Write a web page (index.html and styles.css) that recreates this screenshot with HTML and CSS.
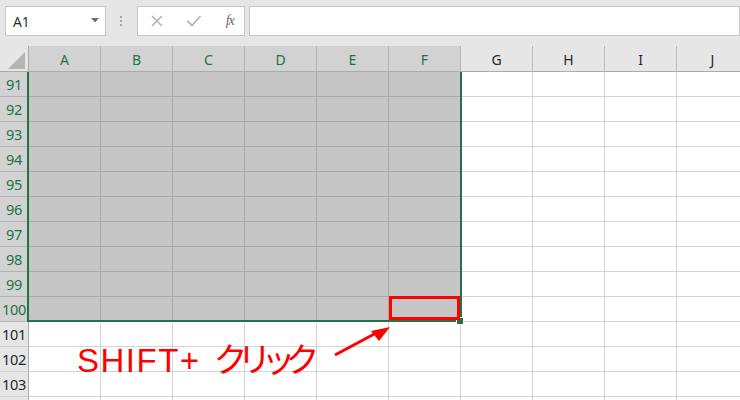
FILE: index.html
```html
<!DOCTYPE html>
<html lang="ja">
<head>
<meta charset="utf-8">
<title>Excel selection</title>
<link rel="stylesheet" href="styles.css">
</head>
<body>
<div class="app">
  <div class="toolbar">
    <div class="namebox">
      <span class="namebox-text">A1</span>
      <svg class="dropdown" width="8" height="5" viewBox="0 0 8 5"><path d="M0 0H8L4 4.5Z" fill="#6f6f6f"/></svg>
    </div>
    <div class="grip"><span></span><span></span><span></span></div>
    <div class="fbuttons">
      <svg class="ficon" width="14" height="14" viewBox="0 0 14 14"><path d="M2 2L12 12M12 2L2 12" stroke="#b4b4b4" stroke-width="1.6" fill="none"/></svg>
      <svg class="ficon" width="16" height="14" viewBox="0 0 16 14"><path d="M1.5 7L6 11.5L14.5 2" stroke="#b4b4b4" stroke-width="1.8" fill="none"/></svg>
      <span class="fx">fx</span>
    </div>
    <div class="formula"></div>
  </div>

  <div class="sheet">
    <div class="grid">
      <div class="corner"><span class="tri"></span></div>
      <div class="ch sel">A</div><div class="ch sel">B</div><div class="ch sel">C</div><div class="ch sel">D</div><div class="ch sel">E</div><div class="ch sel">F</div>
      <div class="ch">G</div><div class="ch">H</div><div class="ch">I</div><div class="ch">J</div>

      <div class="rh sel">91</div><div class="c s"></div><div class="c s"></div><div class="c s"></div><div class="c s"></div><div class="c s"></div><div class="c s"></div><div class="c"></div><div class="c"></div><div class="c"></div><div class="c"></div>
      <div class="rh sel">92</div><div class="c s"></div><div class="c s"></div><div class="c s"></div><div class="c s"></div><div class="c s"></div><div class="c s"></div><div class="c"></div><div class="c"></div><div class="c"></div><div class="c"></div>
      <div class="rh sel">93</div><div class="c s"></div><div class="c s"></div><div class="c s"></div><div class="c s"></div><div class="c s"></div><div class="c s"></div><div class="c"></div><div class="c"></div><div class="c"></div><div class="c"></div>
      <div class="rh sel">94</div><div class="c s"></div><div class="c s"></div><div class="c s"></div><div class="c s"></div><div class="c s"></div><div class="c s"></div><div class="c"></div><div class="c"></div><div class="c"></div><div class="c"></div>
      <div class="rh sel">95</div><div class="c s"></div><div class="c s"></div><div class="c s"></div><div class="c s"></div><div class="c s"></div><div class="c s"></div><div class="c"></div><div class="c"></div><div class="c"></div><div class="c"></div>
      <div class="rh sel">96</div><div class="c s"></div><div class="c s"></div><div class="c s"></div><div class="c s"></div><div class="c s"></div><div class="c s"></div><div class="c"></div><div class="c"></div><div class="c"></div><div class="c"></div>
      <div class="rh sel">97</div><div class="c s"></div><div class="c s"></div><div class="c s"></div><div class="c s"></div><div class="c s"></div><div class="c s"></div><div class="c"></div><div class="c"></div><div class="c"></div><div class="c"></div>
      <div class="rh sel">98</div><div class="c s"></div><div class="c s"></div><div class="c s"></div><div class="c s"></div><div class="c s"></div><div class="c s"></div><div class="c"></div><div class="c"></div><div class="c"></div><div class="c"></div>
      <div class="rh sel">99</div><div class="c s"></div><div class="c s"></div><div class="c s"></div><div class="c s"></div><div class="c s"></div><div class="c s"></div><div class="c"></div><div class="c"></div><div class="c"></div><div class="c"></div>
      <div class="rh sel">100</div><div class="c s"></div><div class="c s"></div><div class="c s"></div><div class="c s"></div><div class="c s"></div><div class="c s"></div><div class="c"></div><div class="c"></div><div class="c"></div><div class="c"></div>
      <div class="rh">101</div><div class="c"></div><div class="c"></div><div class="c"></div><div class="c"></div><div class="c"></div><div class="c"></div><div class="c"></div><div class="c"></div><div class="c"></div><div class="c"></div>
      <div class="rh">102</div><div class="c"></div><div class="c"></div><div class="c"></div><div class="c"></div><div class="c"></div><div class="c"></div><div class="c"></div><div class="c"></div><div class="c"></div><div class="c"></div>
      <div class="rh">103</div><div class="c"></div><div class="c"></div><div class="c"></div><div class="c"></div><div class="c"></div><div class="c"></div><div class="c"></div><div class="c"></div><div class="c"></div><div class="c"></div>
      <div class="rh"></div><div class="c"></div><div class="c"></div><div class="c"></div><div class="c"></div><div class="c"></div><div class="c"></div><div class="c"></div><div class="c"></div><div class="c"></div><div class="c"></div>
    </div>

    <div class="selection"></div>
    <div class="handle"></div>
    <div class="redbox"></div>
    <div class="note"><span class="latin">SHIFT+</span><span class="kana">クリック</span></div>
    <svg class="arrow" width="740" height="354" viewBox="0 46 740 354">
      <line x1="335" y1="355" x2="378" y2="332" stroke="#ff0000" stroke-width="3"/>
      <polygon points="390,327 371,331 379,341" fill="#ff0000"/>
    </svg>
  </div>
</div>
</body>
</html>
```

FILE: styles.css
```css
html, body {
  margin: 0;
  padding: 0;
  background: #ffffff;
}
body {
  width: 740px;
  height: 400px;
  overflow: hidden;
  font-family: "Noto Sans", "Noto Sans CJK JP", sans-serif;
}
.app {
  width: 740px;
  height: 400px;
  overflow: hidden;
  position: relative;
}
.toolbar {
  height: 46px;
  box-sizing: border-box;
  background: #e6e6e6;
  display: flex;
  align-items: flex-start;
  padding: 6px 0 0 5px;
}
.namebox {
  width: 101px;
  height: 30px;
  box-sizing: border-box;
  background: #ffffff;
  border: 1px solid #c6c6c6;
  display: flex;
  align-items: center;
  justify-content: space-between;
  padding: 0 6px 0 7px;
}
.namebox-text {
  font-size: 14px;
  color: #262626;
  font-family: "Open Sans", "Noto Sans", sans-serif;
}
.dropdown { margin-top: -2px; }
.grip {
  width: 31px;
  height: 30px;
  display: flex;
  flex-direction: column;
  align-items: center;
  justify-content: center;
  gap: 2px;
}
.grip span {
  width: 2px;
  height: 2px;
  background: #a6a6a6;
}
.fbuttons {
  width: 109px;
  height: 30px;
  box-sizing: border-box;
  background: #ffffff;
  border: 1px solid #c6c6c6;
  display: flex;
  align-items: center;
  padding-left: 12px;
  gap: 22px;
}
.fx {
  font-family: "Liberation Serif", serif;
  font-style: italic;
  font-size: 14px;
  color: #6b6b6b;
  margin-left: 2px;
  letter-spacing: -1px;
}
.formula {
  margin-left: 4px;
  width: 492px;
  height: 30px;
  box-sizing: border-box;
  background: #ffffff;
  border: 1px solid #c6c6c6;
}

.sheet {
  position: relative;
}
.grid {
  display: grid;
  grid-template-columns: 29px repeat(10, 72px);
  grid-template-rows: 26px repeat(14, 25px);
  width: 749px;
}
.grid > div {
  box-sizing: border-box;
  border-right: 1px solid #d4d4d4;
  border-bottom: 1px solid #d4d4d4;
}
.corner {
  position: relative;
  background: #e6e6e6;
  border-right: 1px solid #ababab !important;
  border-bottom: 1px solid #ababab !important;
}
.tri {
  position: absolute;
  left: 8px;
  top: 6px;
  width: 0;
  height: 0;
  border-left: 17px solid transparent;
  border-bottom: 17px solid #b5b5b5;
}
.ch {
  background: #e6e6e6;
  border-right: 1px solid #bdbdbd !important;
  border-bottom: 1px solid #ababab !important;
  display: flex;
  align-items: center;
  justify-content: center;
  font-size: 14px;
  color: #262626;
  padding-top: 1px;
}
.ch.sel {
  background: #d2d2d2;
  color: #217346;
  border-right-color: #b4b4b4 !important;
}
.rh {
  background: #e6e6e6;
  border-right: 1px solid #ababab !important;
  border-bottom: 1px solid #cfcfcf !important;
  display: flex;
  align-items: center;
  justify-content: center;
  font-size: 14.5px;
  color: #262626;
  letter-spacing: -0.3px;
}
.rh.sel {
  background: #d2d2d2;
  color: #217346;
  border-bottom-color: #b4b4b4 !important;
}
.c.s {
  background: #c6c6c6;
  border-right-color: #a9a9a9;
  border-bottom-color: #a9a9a9;
}

.selection {
  position: absolute;
  left: 27px;
  top: 26px;
  width: 435px;
  height: 250px;
  box-sizing: border-box;
  border-left: 2px solid #217346;
  border-right: 2px solid #217346;
  border-bottom: 2px solid #217346;
}
.handle {
  position: absolute;
  left: 456px;
  top: 271px;
  width: 6px;
  height: 6px;
  background: #217346;
  border: 1px solid #ffffff;
}
.redbox {
  position: absolute;
  left: 389px;
  top: 250px;
  width: 71px;
  height: 24px;
  box-sizing: border-box;
  border: 3px solid #ff0000;
}
.note {
  position: absolute;
  left: 77px;
  top: 292px;
  line-height: 40px;
  color: #ff0000;
  white-space: nowrap;
  display: flex;
  align-items: baseline;
  gap: 13px;
}
.latin {
  font-family: "Liberation Sans", sans-serif;
  font-size: 33px;
  letter-spacing: 1.5px;
}
.kana {
  font-family: "Noto Sans CJK JP", sans-serif;
  font-size: 34px;
  letter-spacing: -10px;
}
.arrow {
  position: absolute;
  left: 0;
  top: 0;
}
```
